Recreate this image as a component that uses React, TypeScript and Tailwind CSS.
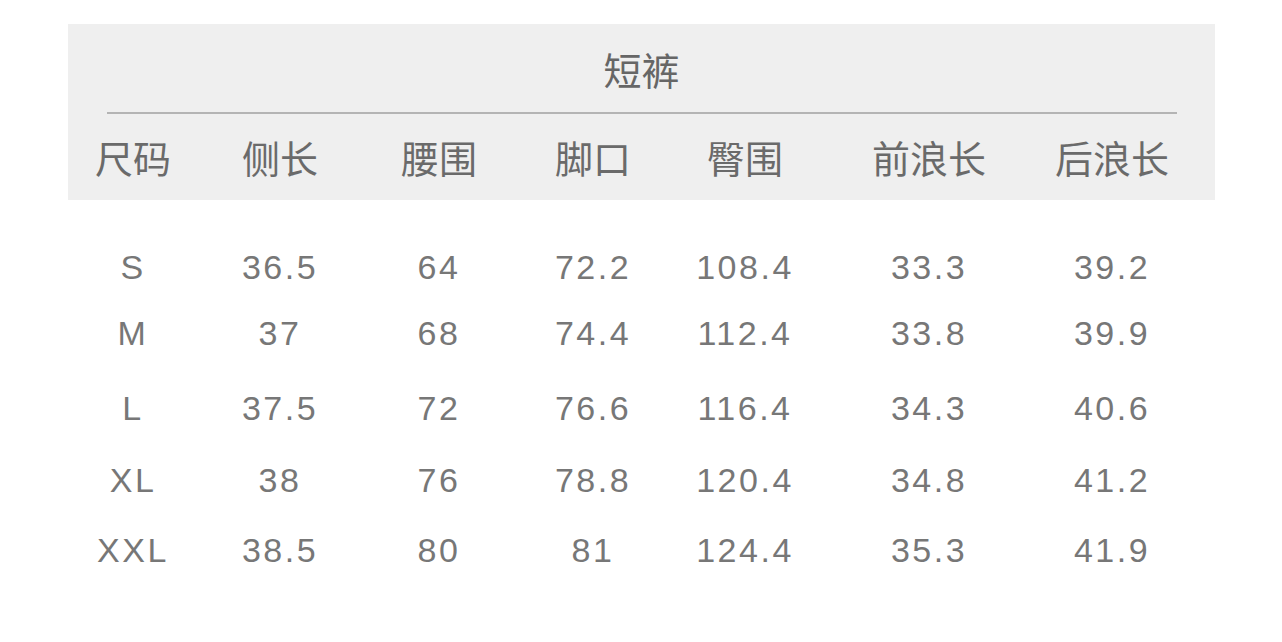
import React from "react";

const widths = ["w-[150px]", "w-[144px]", "w-[174px]", "w-[134px]", "w-[170px]", "w-[198px]", "w-[168px]"];
const headers = ["尺码", "侧长", "腰围", "脚口", "臀围", "前浪长", "后浪长"];
const rows: { h: string; cells: string[] }[] = [
  { h: "h-[66px]", cells: ["S", "36.5", "64", "72.2", "108.4", "33.3", "39.2"] },
  { h: "h-[75px]", cells: ["M", "37", "68", "74.4", "112.4", "33.8", "39.9"] },
  { h: "h-[72px]", cells: ["L", "37.5", "72", "76.6", "116.4", "34.3", "40.6"] },
  { h: "h-[70px]", cells: ["XL", "38", "76", "78.8", "120.4", "34.8", "41.2"] },
  { h: "h-[40px]", cells: ["XXL", "38.5", "80", "81", "124.4", "35.3", "41.9"] },
];

export default function App() {
  return (
    <div className="w-[1282px] h-[642px] bg-white overflow-hidden pt-[24px]" style={{ fontFamily: '"Liberation Sans", "Noto Sans CJK SC", sans-serif' }}>
      <div className="ml-[68px] w-[1147px] h-[176px] bg-[#efefef] flex flex-col">
        <div className="h-[88px] flex items-center justify-center pt-[2px]">
          <span className="text-[38px] leading-none text-[#666666]" style={{ fontFamily: '"Noto Sans CJK SC", sans-serif' }}>短裤</span>
        </div>
        <div className="ml-[39px] w-[1070px] h-[2px] bg-[#b4b4b4]" />
        <div className="flex items-center h-[84px] -ml-[10px] pt-[2px]">
          {headers.map((t, i) => (
            <div key={i} className={`${widths[i]} text-center text-[38px] leading-none text-[#6a6a6a]`} style={{ fontFamily: '"Noto Sans CJK SC", sans-serif' }}>
              {t}
            </div>
          ))}
        </div>
      </div>
      <div className="ml-[58px] mt-[47px] flex flex-col">
        {rows.map((r, ri) => (
          <div key={ri} className={`flex ${r.h}`}>
            {r.cells.map((c, i) => (
              <div key={i} className={`${widths[i]} h-[40px] flex items-center justify-center text-[34px] leading-none tracking-[2.5px] text-[#777777]`}>
                {c}
              </div>
            ))}
          </div>
        ))}
      </div>
    </div>
  );
}
